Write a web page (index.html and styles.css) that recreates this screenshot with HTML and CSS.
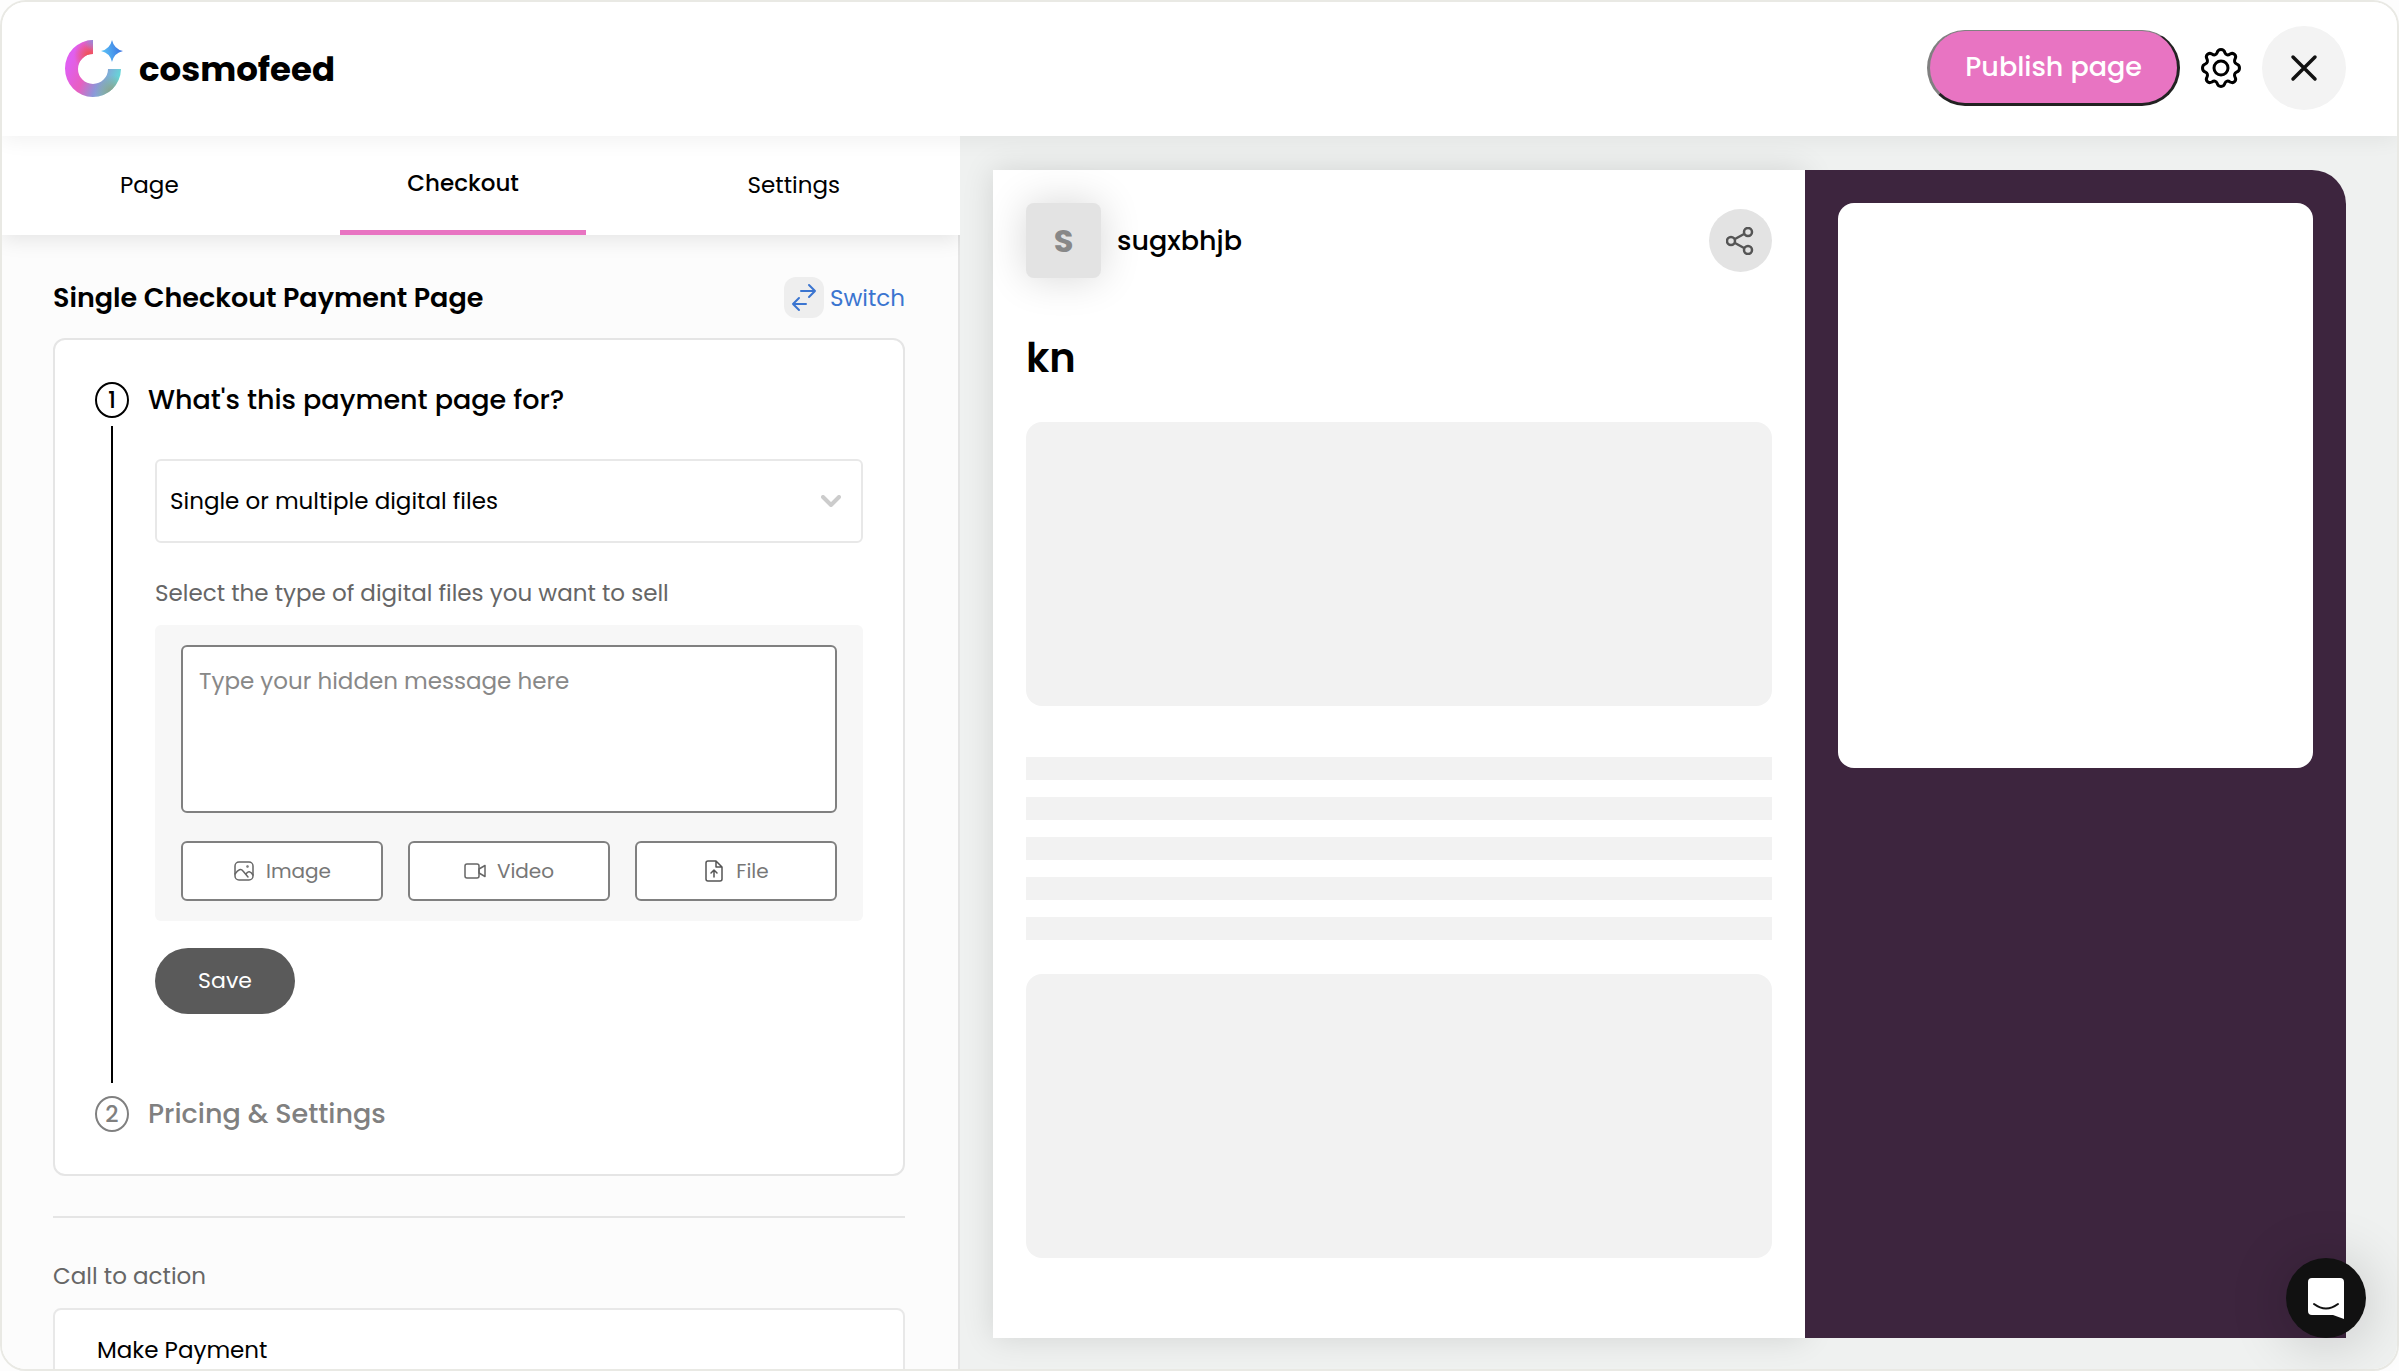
FILE: index.html
```html
<!DOCTYPE html>
<html lang="en">
<head>
  <meta charset="UTF-8">
  <meta name="viewport" content="width=device-width, initial-scale=1.0">
  <title>cosmofeed - Payment Page</title>
  <link rel="stylesheet" href="styles.css">
</head>
<body>
  <div class="app">
    <header class="header">
      <a class="brand" href="#">
        <svg class="brand-logo" viewBox="0 0 58 57" aria-hidden="true">
          <defs>
            <linearGradient id="ring" x1="0" y1="0.3" x2="1" y2="0.7">
              <stop offset="0.1" stop-color="#e05ff0"/>
              <stop offset="0.4" stop-color="#e85fc0"/>
              <stop offset="0.65" stop-color="#8f95d8"/>
              <stop offset="1" stop-color="#5fe0d8"/>
            </linearGradient>
            <radialGradient id="ringRed" gradientUnits="userSpaceOnUse" cx="24" cy="15" r="15">
              <stop offset="0" stop-color="#f0504e"/>
              <stop offset="1" stop-color="#f0504e" stop-opacity="0"/>
            </radialGradient>
            <radialGradient id="ringBlue" gradientUnits="userSpaceOnUse" cx="29" cy="0" r="11">
              <stop offset="0" stop-color="#8a8fd8"/>
              <stop offset="1" stop-color="#8a8fd8" stop-opacity="0"/>
            </radialGradient>
            <radialGradient id="ringGreen" gradientUnits="userSpaceOnUse" cx="47" cy="52" r="17">
              <stop offset="0" stop-color="#8f9f86"/>
              <stop offset="1" stop-color="#8f9f86" stop-opacity="0"/>
            </radialGradient>
            <linearGradient id="star" x1="0" y1="0.6" x2="1" y2="0.4">
              <stop offset="0" stop-color="#5cc8f8"/>
              <stop offset="1" stop-color="#3a6fe0"/>
            </linearGradient>
          </defs>
          <path fill="url(#ring)" d="M28 0A28 28.500 0 1 0 56 29H43A15 15 0 1 1 28 14Z"/>
          <path fill="url(#ringRed)" d="M28 0A28 28.500 0 1 0 56 29H43A15 15 0 1 1 28 14Z"/>
          <path fill="url(#ringBlue)" d="M28 0A28 28.500 0 1 0 56 29H43A15 15 0 1 1 28 14Z"/>
          <path fill="url(#ringGreen)" d="M28 0A28 28.500 0 1 0 56 29H43A15 15 0 1 1 28 14Z"/>
          <path fill="url(#star)" d="M47 0Q49 9 58 11Q49 13 47 22Q45 13 36 11Q45 9 47 0Z"/>
        </svg>
        <span class="brand-name">cosmofeed</span>
      </a>
      <div class="header-actions">
        <button type="button" class="publish-btn">Publish page</button>
        <button type="button" class="icon-btn" aria-label="Page settings">
          <svg class="gear-icon" viewBox="0 0 42 42" fill="none" stroke="#000" stroke-width="3" stroke-linejoin="round" aria-hidden="true">
            <path d="M21 2.500C24 2.500 24.500 4 25 6C25.800 8 28 8.500 30 7C32 6 33.500 6.200 34.600 7.400C36 8.800 36 10.300 35 12C34 14 34.500 16 36.500 16.800C38.500 17.500 39.500 18.500 39.500 21C39.500 23.500 38.500 24.500 36.500 25.200C34.500 26 34 28 35 30C36 31.700 36 33.200 34.600 34.600C33.500 35.800 32 36 30 35C28 33.500 25.800 34 25 36C24.500 38 24 39.500 21 39.500C18 39.500 17.500 38 17 36C16.200 34 14 33.500 12 35C10 36 8.500 35.800 7.400 34.600C6 33.200 6 31.700 7 30C8 28 7.500 26 5.500 25.200C3.500 24.500 2.500 23.500 2.500 21C2.500 18.500 3.500 17.500 5.500 16.800C7.500 16 8 14 7 12C6 10.300 6 8.800 7.400 7.400C8.500 6.200 10 6 12 7C14 8.500 16.200 8 17 6C17.500 4 18 2.500 21 2.500Z"/>
            <circle cx="21" cy="21" r="7"/>
          </svg>
        </button>
        <button type="button" class="close-btn" aria-label="Close">
          <svg class="close-icon" viewBox="0 0 28 28" fill="none" stroke="#111" stroke-width="3.500" stroke-linecap="round" aria-hidden="true">
            <path d="M3 3L25 25M25 3L3 25"/>
          </svg>
        </button>
      </div>
    </header>

    <main class="main">
      <section class="editor">
        <nav class="tabs">
          <a class="tab" href="#">Page</a>
          <a class="tab active" href="#">Checkout</a>
          <a class="tab" href="#">Settings</a>
        </nav>

        <div class="editor-body">
          <div class="editor-head">
            <h2>Single Checkout Payment Page</h2>
            <button type="button" class="switch-btn">
              <span class="switch-icon">
                <svg viewBox="0 0 40 40" fill="none" stroke="#3b75d0" stroke-width="2" stroke-linecap="round" stroke-linejoin="round" aria-hidden="true">
                  <path d="M17 14H31M25 8L31 14L25 20M22 27H9M15 21L9 27L15 33"/>
                </svg>
              </span>
              Switch
            </button>
          </div>

          <!-- Steps -->
          <div class="card">
            <div class="step">
              <div class="step-side">
                <span class="step-number">1</span>
                <span class="step-line"></span>
              </div>
              <div class="step-content">
                <h3>What's this payment page for?</h3>
                <div class="step-body">
                  <div class="select-wrap">
                    <select class="product-select" aria-label="What's this payment page for?">
                      <option>Single or multiple digital files</option>
                    </select>
                    <svg class="chevron" viewBox="0 0 20 12" fill="none" stroke="#ccc" stroke-width="4" stroke-linecap="round" stroke-linejoin="round" aria-hidden="true">
                      <path d="M2 2L10 10L18 2"/>
                    </svg>
                  </div>
                  <label class="field-label" for="message">Select the type of digital files you want to sell</label>
                  <div class="upload-box">
                    <textarea id="message" placeholder="Type your hidden message here"></textarea>
                    <div class="upload-buttons">
                      <button type="button" class="upload-btn">
                        <svg viewBox="0 0 22 22" fill="none" stroke="#666" stroke-width="1.500" stroke-linecap="round" stroke-linejoin="round" aria-hidden="true">
                          <rect x="2" y="2" width="18" height="18" rx="4"/>
                          <path d="M2 14Q7 7 10 11L15 17M13 14Q16 9 20 15"/>
                          <circle cx="14.500" cy="6.500" r="0.500"/>
                        </svg>
                        Image
                      </button>
                      <button type="button" class="upload-btn">
                        <svg viewBox="0 0 22 22" fill="none" stroke="#666" stroke-width="1.500" stroke-linejoin="round" aria-hidden="true">
                          <rect x="1" y="4" width="14" height="14" rx="2"/>
                          <path d="M15 9L21 5.500V16.500L15 13Z"/>
                        </svg>
                        Video
                      </button>
                      <button type="button" class="upload-btn">
                        <svg viewBox="0 0 22 22" fill="none" stroke="#555" stroke-width="1.500" stroke-linecap="round" stroke-linejoin="round" aria-hidden="true">
                          <path d="M13 1H5Q3 1 3 3V19Q3 21 5 21H17Q19 21 19 19V7ZM13 1V7H19M11 17V10M8 13L11 10L14 13"/>
                        </svg>
                        File
                      </button>
                    </div>
                  </div>
                  <button type="button" class="save-btn">Save</button>
                </div>
              </div>
            </div>
            <div class="step inactive">
              <div class="step-side">
                <span class="step-number">2</span>
              </div>
              <div class="step-content">
                <h3>Pricing &amp; Settings</h3>
              </div>
            </div>
          </div>

          <hr>

          <label class="field-label" for="cta">Call to action</label>
          <input type="text" id="cta" class="cta-input" value="Make Payment">
        </div>
      </section>

      <!-- Live preview -->
      <section class="preview">
        <div class="preview-page">
          <div class="preview-head">
            <span class="avatar">S</span>
            <span class="creator">sugxbhjb</span>
            <button type="button" class="share-btn" aria-label="Share">
              <svg viewBox="0 0 28 28" fill="none" stroke="#555" stroke-width="2.500" aria-hidden="true">
                <circle cx="5" cy="14" r="4"/>
                <circle cx="22" cy="5" r="4"/>
                <circle cx="22" cy="23" r="4"/>
                <path d="M9 12L18 7M9 16L18 21"/>
              </svg>
            </button>
          </div>
          <h1>kn</h1>
          <div class="block"></div>
          <div class="lines">
            <div class="line"></div>
            <div class="line"></div>
            <div class="line"></div>
            <div class="line"></div>
            <div class="line"></div>
          </div>
          <div class="block"></div>
        </div>
        <div class="preview-side">
          <div class="preview-form"></div>
        </div>
      </section>
    </main>

    <button type="button" class="chat-btn" aria-label="Open chat">
      <svg viewBox="0 0 36 41" aria-hidden="true">
        <path fill="#fff" d="M4 0H32Q36 0 36 4V41L25 37H4Q0 37 0 33V4Q0 0 4 0Z"/>
        <path fill="none" stroke="#111" stroke-width="2" stroke-linecap="round" d="M6 26Q18 35 30 26"/>
      </svg>
    </button>
  </div>
</body>
</html>
```
FILE: styles.css
```css
* {
  box-sizing: border-box;
}
body {
  margin: 0;
  background: #fdfdfd;
  color: #000;
  font-family: Poppins, Inter, sans-serif;
  font-size: 23px;
  line-height: 36px;
}
button, input, select, textarea {
  font: inherit;
  color: inherit;
}
button {
  padding: 0;
  border: 0;
  background: none;
  cursor: pointer;
}
a {
  color: inherit;
  text-decoration: none;
}
h1, h2, h3 {
  margin: 0;
}
svg {
  display: block;
}
.app {
  display: flex;
  flex-direction: column;
  height: 100vh;
  border: 2px solid #e9e9e4;
  border-radius: 26px;
  background: #fff;
  overflow: hidden;
}

/* header */
.header {
  position: relative;
  z-index: 2;
  display: flex;
  flex: none;
  align-items: center;
  justify-content: space-between;
  height: 134px;
  padding: 0 51px 2px 63px;
  background: #fff;
  box-shadow: 0 4px 20px rgba(0, 0, 0, 0.06);
}
.brand {
  display: flex;
  align-items: center;
  gap: 16px;
}
.brand-logo {
  width: 58px;
  height: 57px;
}
.brand-name {
  padding-top: 2px;
  font-size: 34px;
  font-weight: 700;
}
.header-actions {
  display: flex;
  align-items: center;
  gap: 20px;
}
.publish-btn {
  height: 76px;
  padding: 0 35px;
  border: 3px solid #222;
  border-top: 1px solid #808080;
  border-left-color: #808080;
  border-radius: 38px;
  background: #e874c2;
  color: #fff;
  font-size: 27px;
  font-weight: 500;
}
.gear-icon {
  width: 42px;
  height: 42px;
}
.close-btn {
  display: flex;
  align-items: center;
  justify-content: center;
  width: 84px;
  height: 84px;
  border-radius: 50%;
  background: #f3f3f3;
}
.close-icon {
  width: 28px;
  height: 28px;
}

/* editor */
.main {
  display: flex;
  flex: 1;
  min-height: 0;
}
.editor {
  display: flex;
  flex-direction: column;
  width: 40%;
  border-right: 2px solid #e5e5e5;
  background: #fcfcfc;
}
.tabs {
  display: flex;
  flex: none;
  justify-content: space-between;
  height: 99px;
  margin-right: -2px;
  padding: 0 53px 0 51px;
  background: #fff;
  box-shadow: 0 4px 20px rgba(0, 0, 0, 0.1);
}
.tab {
  padding: 31px 67px 0;
}
.tab.active {
  padding-top: 29px;
  border-bottom: 5px solid #e874c2;
  font-weight: 500;
}
.editor-body {
  flex: 1;
  min-height: 0;
  padding: 42px 53px 0 51px;
  overflow: hidden;
}
.editor-head {
  display: flex;
  align-items: center;
  justify-content: space-between;
  margin-bottom: 20px;
}
h2 {
  font-size: 27px;
  font-weight: 600;
}
.switch-btn {
  display: flex;
  align-items: center;
  gap: 6px;
  color: #3b75d0;
}
.switch-icon {
  width: 40px;
  height: 41px;
  border-radius: 12px;
  background: #eee;
}
.card {
  padding: 42px 40px;
  border: 2px solid #e5e5e5;
  border-radius: 12px;
  background: #fff;
}
.step {
  display: flex;
  gap: 19px;
}
.step-side {
  display: flex;
  flex-direction: column;
  align-items: center;
  width: 34px;
}
.step-number {
  width: 34px;
  height: 36px;
  border: 2px solid #000;
  border-radius: 50%;
  font-weight: 500;
  text-align: center;
  line-height: 33px;
}
.step-line {
  flex: 1;
  width: 2px;
  margin: 8px 0 13px;
  background: #000;
}
.step-content {
  flex: 1;
}
h3 {
  font-size: 27px;
  font-weight: 500;
}
.step-body {
  margin: 41px 0 82px 7px;
}
.step.inactive {
  color: #808080;
}
.step.inactive .step-number {
  border-color: #808080;
}
.select-wrap {
  position: relative;
  margin-bottom: 32px;
}
.product-select {
  width: 100%;
  height: 84px;
  padding: 0 13px;
  border: 2px solid #e8e8e8;
  border-radius: 6px;
  background: #fff;
  appearance: none;
}
.chevron {
  position: absolute;
  top: 36px;
  right: 22px;
  width: 20px;
  height: 12px;
  pointer-events: none;
}
.field-label {
  display: block;
  margin-bottom: 14px;
  color: #666;
}
.upload-box {
  padding: 20px 26px;
  border-radius: 6px;
  background: #f7f7f7;
}
textarea {
  display: block;
  width: 100%;
  height: 168px;
  margin-bottom: 28px;
  padding: 16px;
  border: 2px solid #808080;
  border-radius: 6px;
  background: #fff;
  resize: none;
}
textarea::placeholder {
  color: #888;
}
.upload-buttons {
  display: flex;
  gap: 25px;
}
.upload-btn {
  display: flex;
  flex: 1;
  align-items: center;
  justify-content: center;
  gap: 11px;
  height: 60px;
  border: 2px solid #808080;
  border-radius: 6px;
  background: #fff;
  color: #777;
  font-size: 20px;
}
.upload-btn svg {
  width: 22px;
  height: 22px;
}
.save-btn {
  width: 140px;
  height: 66px;
  margin-top: 27px;
  border-radius: 33px;
  background: #5a5a5a;
  color: #fff;
  font-size: 22px;
}
hr {
  height: 2px;
  margin: 40px 0;
  border: 0;
  background: #e5e5e5;
}
.cta-input {
  width: 100%;
  height: 84px;
  padding: 0 42px;
  border: 2px solid #e8e8e8;
  border-radius: 8px;
  background: #fff;
}

/* preview */
.preview {
  display: flex;
  flex: 1;
  padding: 34px 51px 31px 33px;
  background: #eff1f0;
}
.preview-page {
  width: 60%;
  padding: 33px 33px 0;
  background: #fff;
  box-shadow: 0 0 30px rgba(0, 0, 0, 0.12);
}
.preview-head {
  display: flex;
  align-items: center;
  gap: 16px;
  margin-bottom: 53px;
}
.avatar {
  width: 75px;
  height: 75px;
  border-radius: 8px;
  background: #e3e3e3;
  box-shadow: 0 0 40px rgba(0, 0, 0, 0.16);
  color: #888;
  font-size: 32px;
  font-weight: 700;
  line-height: 75px;
  text-align: center;
}
.creator {
  flex: 1;
  font-size: 27px;
  font-weight: 500;
}
.share-btn {
  display: flex;
  align-items: center;
  justify-content: center;
  width: 63px;
  height: 63px;
  border-radius: 50%;
  background: #e3e3e3;
}
.share-btn svg {
  width: 28px;
  height: 28px;
}
h1 {
  margin-bottom: 37px;
  font-size: 40px;
  font-weight: 600;
  line-height: 54px;
}
.block {
  height: 284px;
  border-radius: 16px;
  background: #f2f2f2;
}
.lines {
  display: grid;
  gap: 17px;
  margin: 51px 0 34px;
}
.line {
  height: 23px;
  background: #f2f2f2;
}
.preview-side {
  flex: 1;
  padding: 33px;
  border-radius: 0 34px 0 0;
  background: #3d253e;
}
.preview-form {
  height: 565px;
  border-radius: 16px;
  background: #fff;
}
.chat-btn {
  position: fixed;
  right: 33px;
  bottom: 33px;
  z-index: 3;
  display: flex;
  align-items: center;
  justify-content: center;
  width: 80px;
  height: 80px;
  border-radius: 50%;
  background: #111;
  box-shadow: 0 4px 60px rgba(0, 0, 0, 0.2);
}
.chat-btn svg {
  width: 36px;
  height: 41px;
}
```
